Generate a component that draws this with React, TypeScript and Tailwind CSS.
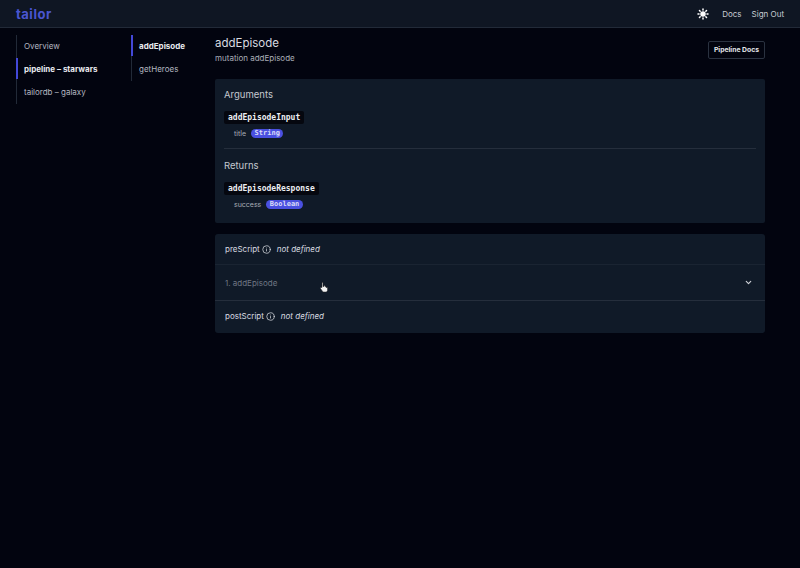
import { ChevronDown, Info, Sun } from "lucide-react";

const font = { fontFamily: "Inter, 'Liberation Sans', sans-serif" };

const apps = [
  { label: "Overview", active: false },
  { label: "pipeline – starwars", active: true },
  { label: "tailordb – galaxy", active: false },
];

const resolvers = [
  { label: "addEpisode", active: true },
  { label: "getHeroes", active: false },
];

function SideNav({ items, className }: { items: { label: string; active: boolean }[]; className: string }) {
  return (
    <ul className={className}>
      {items.map(({ label, active }) => (
        <li
          key={label}
          className={
            active
              ? "h-[21px] mb-[2px] flex items-center border-l-2 border-[#4348d8] pl-[6px] -ml-px text-[8px] font-bold text-[#e8eaee]"
              : "h-[21px] mb-[2px] flex items-center pl-[7px] text-[8px] text-[#b4b8c0]"
          }
        >
          {label}
        </li>
      ))}
    </ul>
  );
}

function TypeRow({ name, field, type }: { name: string; field: string; type: string }) {
  return (
    <div>
      <span className="block w-fit rounded-[2px] bg-[#05070f] px-[4px] py-px font-['DejaVu_Sans_Mono',monospace] text-[8px] leading-[11px] font-bold text-[#eceef2]">
        {name}
      </span>
      <div className="mt-[5px] ml-[10px] flex items-center gap-[5px]">
        <span className="text-[7px] leading-[9px] text-[#a8adb6]">{field}</span>
        <span className="rounded-full bg-[#4a50e0] px-[3.5px] font-['DejaVu_Sans_Mono',monospace] text-[7px] leading-[9px] font-bold text-[#d9dbf8]">
          {type}
        </span>
      </div>
    </div>
  );
}

function ScriptRow({ label }: { label: string }) {
  return (
    <div className="h-[30px] flex items-center px-[10px] text-[8px] text-[#d8dbe0]">
      {label}
      <Info size={9} className="ml-[2px]" />
      <span className="ml-[6px] italic">not defined</span>
    </div>
  );
}

export default function App() {
  return (
    <div style={font} className="relative h-[568px] w-[800px] overflow-hidden bg-[#02040f]">
      <header className="h-[28px] flex items-center justify-between border-b border-[#222a38] bg-[#0f1623] pl-4 pr-4">
        <span className="mt-[1px] text-[13px] leading-none font-bold tracking-[0.5px] text-[#4a55d0]">tailor</span>
        <div className="flex items-center text-[8px] text-[#c8ccd3]">
          <Sun size={12} strokeWidth={3} className="mr-[13px] text-white" fill="white" />
          <span>Docs</span>
          <span className="ml-[10px]">Sign Out</span>
        </div>
      </header>

      <div className="flex pt-[6px] pl-4">
        <SideNav items={apps} className="mt-px w-[115px] h-fit border-l border-[#222a38]" />
        <SideNav items={resolvers} className="mt-px w-[84px] h-fit border-l border-[#222a38]" />

        <main className="w-[550px]">
          <div className="flex items-start justify-between pt-[1px]">
            <div>
              <h1 className="text-[11.5px] leading-[16px] text-[#d8dbe0]">addEpisode</h1>
              <p className="mt-[1px] text-[8px] leading-[12px] text-[#a9aeb7]">mutation addEpisode</p>
            </div>
            <button className="mt-[6px] h-[18px] rounded-[2px] border border-[#2a3240] px-[5px] text-[6.8px] font-bold text-[#e4e6ea]">
              Pipeline Docs
            </button>
          </div>

          <section className="mt-[15px] h-[144px] rounded-[2px] bg-[#101a28] px-[9px] pt-[10px]">
            <h2 className="text-[9.5px] leading-[12px] text-[#c4c8cf]">Arguments</h2>
            <div className="mt-[10px]">
              <TypeRow name="addEpisodeInput" field="title" type="String" />
            </div>
            <div className="mt-[10px] h-px bg-[#252e3c]" />
            <h2 className="mt-[11px] text-[9.5px] leading-[12px] text-[#c4c8cf]">Returns</h2>
            <div className="mt-[10px]">
              <TypeRow name="addEpisodeResponse" field="success" type="Boolean" />
            </div>
          </section>

          <section className="mt-[11px] h-[99px] rounded-[3px] bg-[#101a28]">
            <ScriptRow label="preScript" />
            <div className="h-px bg-[#1a2432]" />
            <div className="h-[35px] flex items-center justify-between pl-[10px] pr-[12px] text-[8px] text-[#6f7683]">
              <span>1. addEpisode</span>
              <ChevronDown size={9} strokeWidth={3} className="text-[#d0d3d9]" />
            </div>
            <div className="h-px bg-[#252e3c]" />
            <ScriptRow label="postScript" />
          </section>
        </main>
      </div>

      {/* mouse pointer */}
      <svg className="absolute left-[320px] top-[282px]" width="9" height="11" viewBox="0 0 9 11">
        <path
          d="M2 0.5h1v4h1v-1h1v1h1v1h1.500v3l-1 1.500h-3.500l-2.500-3.500v-1h1.500z"
          fill="#f2f2f2"
          stroke="#222"
          strokeWidth="0.5"
        />
      </svg>
    </div>
  );
}
